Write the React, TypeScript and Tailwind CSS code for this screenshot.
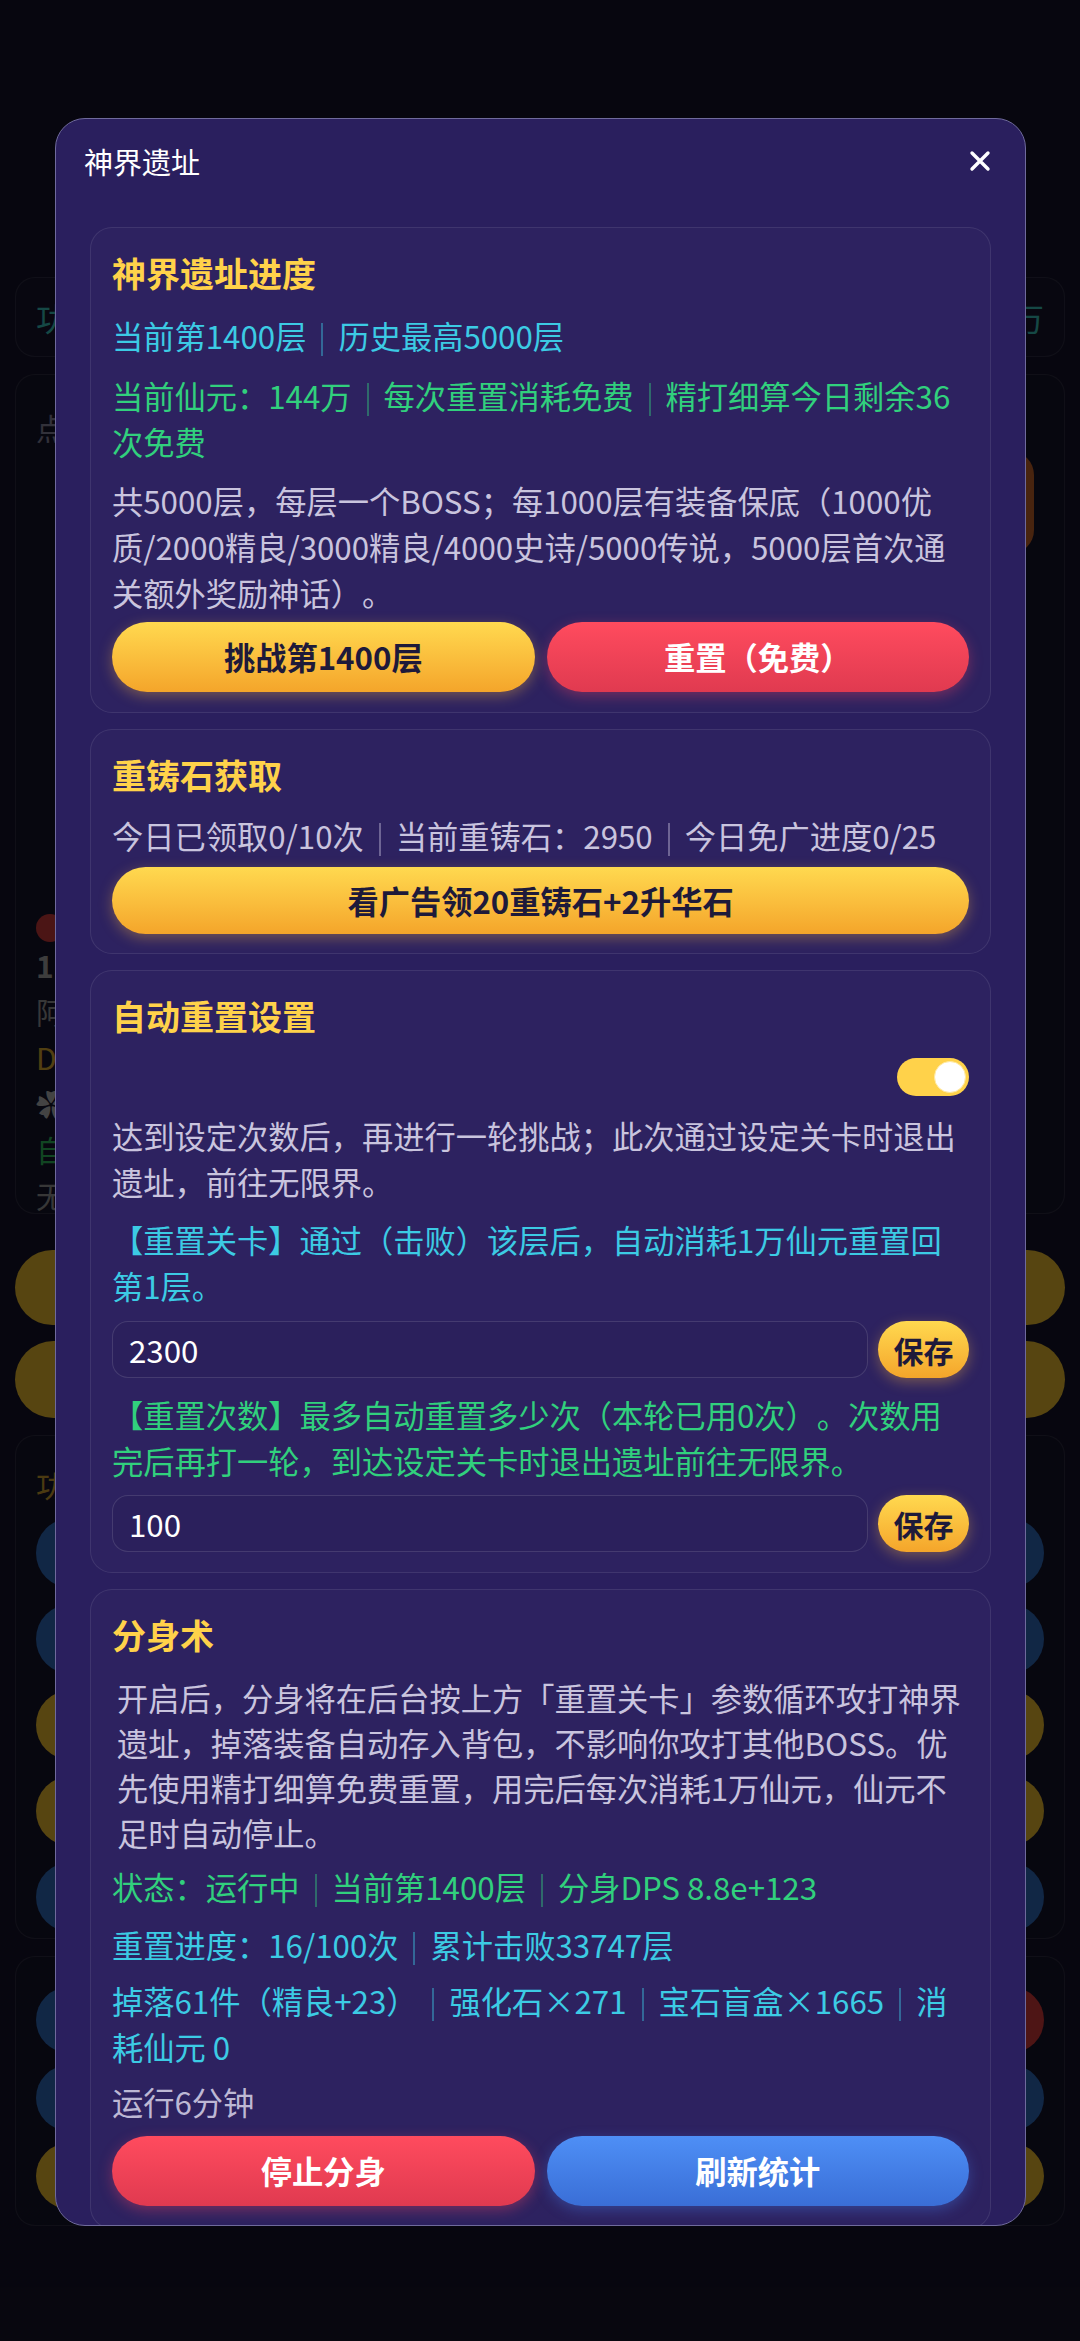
import React from "react";

const Sep = () => <span className="inline-block w-[2px] h-[33px] mx-[15px] align-[-7px] bg-current opacity-[0.42]" />;

function Card({ children, className = "" }: { children: React.ReactNode; className?: string }) {
  return (
    <div className={"shrink-0 rounded-[22px] border border-white/[0.09] bg-white/[0.015] px-[21px] pt-[21px] " + className}>
      {children}
    </div>
  );
}

function Title({ children }: { children: React.ReactNode }) {
  return <div className="text-[34px] leading-[48px] font-bold text-[#ffd24a]">{children}</div>;
}

function YellowBtn({ children, className = "" }: { children: React.ReactNode; className?: string }) {
  return (
    <div
      className={
        "flex items-center justify-center rounded-full bg-linear-to-b from-[#ffd94f] to-[#f4a52a] font-bold text-[#1e1a3a] shadow-[0_4px_14px_rgba(255,186,60,0.35)] " +
        className
      }
    >
      {children}
    </div>
  );
}

function RedBtn({ children, className = "" }: { children: React.ReactNode; className?: string }) {
  return (
    <div
      className={
        "flex items-center justify-center rounded-full bg-linear-to-b from-[#ff4b5e] to-[#e03a50] font-bold text-white shadow-[0_4px_14px_rgba(255,70,95,0.35)] " +
        className
      }
    >
      {children}
    </div>
  );
}

function BlueBtn({ children, className = "" }: { children: React.ReactNode; className?: string }) {
  return (
    <div
      className={
        "flex items-center justify-center rounded-full bg-linear-to-b from-[#4e8ff6] to-[#3a6ed6] font-bold text-white shadow-[0_4px_14px_rgba(70,130,240,0.35)] " +
        className
      }
    >
      {children}
    </div>
  );
}

function InputRow({ value, className = "" }: { value: string; className?: string }) {
  return (
    <div className={"flex items-center gap-[10px] " + className}>
      <input
        readOnly
        value={value}
        className="flex-1 min-w-0 h-[57px] rounded-[16px] border border-white/[0.12] bg-black/[0.04] pl-[16px] text-white outline-none"
      />
      <YellowBtn className="w-[91px] h-[57px] text-[30px]">保存</YellowBtn>
    </div>
  );
}

function Background() {
  return (
    <div className="flex flex-col px-[15px] pt-[277px] gap-[17px]">
      <div className="h-[80px] rounded-[20px] border border-white/10 bg-[#17152e] flex items-center justify-between px-[20px] text-[32px] text-[#3cc7c0]">
        <span>功</span>
        <span>万</span>
      </div>
      <div className="h-[840px] rounded-[20px] border border-white/10 bg-[#16142c] px-[20px] pt-[30px] flex flex-col">
        <div className="flex justify-between">
          <span className="text-[30px] text-[#8a88a0]">点</span>
          <div className="mt-[46px] mr-[10px] w-[120px] h-[103px] rounded-[24px] bg-[#c8652a]" />
        </div>
        <div className="mt-[360px] flex justify-between">
          <div className="flex flex-col text-[30px] leading-[46px]">
            <span className="w-[28px] h-[28px] rounded-full bg-[#d03a3a]" />
            <span className="font-bold text-[#aaa]">1</span>
            <span className="text-[#999]">阿</span>
            <span className="text-[#e0b030]">D</span>
            <span className="text-[#bbb]">✿</span>
            <span className="text-[#30c060]">自</span>
            <span className="text-[#999]">无</span>
          </div>
          <div className="mt-[80px] mr-[20px] w-[90px] h-[60px] rounded-full bg-[#f0c030]" />
        </div>
      </div>
      <div className="mt-[19px] h-[75px] rounded-full bg-[#f0c030]" />
      <div className="-mt-[1px] h-[77px] rounded-full bg-[#f0c030]" />
      <div className="h-[504px] rounded-[20px] border border-white/10 bg-[#16142c] px-[20px] pt-[30px] flex flex-col gap-[16px]">
        <span className="text-[30px] text-[#d0a030] leading-[36px]">功</span>
        <div className="h-[70px] rounded-full bg-[#2f6ec0]" />
        <div className="h-[70px] rounded-full bg-[#2f6ec0]" />
        <div className="h-[70px] rounded-full bg-[#f0c030]" />
        <div className="h-[70px] rounded-full bg-[#f0c030]" />
        <div className="h-[70px] rounded-full bg-[#2f6ec0]" />
      </div>
      <div className="h-[270px] rounded-[20px] border border-white/10 bg-[#16142c] px-[20px] pt-[30px] grid grid-cols-2 gap-[12px] content-start">
        <div className="h-[66px] rounded-full bg-[#2f6ec0]" />
        <div className="h-[66px] rounded-full bg-[#d83a3a]" />
        <div className="h-[66px] rounded-full bg-[#2f6ec0]" />
        <div className="h-[66px] rounded-full bg-[#2f6ec0]" />
        <div className="h-[66px] rounded-full bg-[#f0c030]" />
        <div className="h-[66px] rounded-full bg-[#f0c030]" />
      </div>
    </div>
  );
}

export default function App() {
  return (
    <div className="relative w-[1080px] h-[2341px] overflow-hidden bg-[#15132a] font-['Noto_Sans_CJK_SC','Noto_Sans',sans-serif] [text-spacing-trim:space-all]">
      <Background />
      <div className="absolute inset-0 bg-black/[0.64]" />

      <div className="absolute left-[55px] top-[118px] w-[971px] h-[2108px] rounded-[30px] border border-[#6f6a9c] bg-[#2a1f5e] overflow-hidden flex flex-col">
        <div className="h-[84px] shrink-0 flex items-center justify-between pl-[28px] pr-[34px]">
          <span className="text-[29px] leading-[40px] text-white">神界遗址</span>
          <svg width="22" height="22" viewBox="0 0 22 22">
            <path d="M3 3L19 19M19 3L3 19" stroke="white" strokeWidth="3.4" strokeLinecap="round" />
          </svg>
        </div>

        <div className="flex-1 overflow-hidden px-[34px] pt-[24px] flex flex-col gap-[16px] text-[31.25px] leading-[46px]">
          <Card className="pb-[20px]">
            <Title>神界遗址进度</Title>
            <div className="mt-[16px] text-[#3ccbe4]">
              当前第1400层<Sep />历史最高5000层
            </div>
            <div className="mt-[14px] text-[#31d07d]">
              当前仙元：144万<Sep />每次重置消耗免费<Sep />精打细算今日剩余36次免费
            </div>
            <div className="mt-[13px] text-[#c9c4de]">
              共5000层，每层一个BOSS；每1000层有装备保底（1000优质/2000精良/3000精良/4000史诗/5000传说，5000层首次通关额外奖励神话）。
            </div>
            <div className="mt-[6px] grid grid-cols-2 gap-[12px]">
              <YellowBtn className="h-[70px]">挑战第1400层</YellowBtn>
              <RedBtn className="h-[70px]">重置（免费）</RedBtn>
            </div>
          </Card>

          <Card className="pb-[19px]">
            <Title>重铸石获取</Title>
            <div className="mt-[14px] text-[#c9c4de]">
              今日已领取0/10次<Sep />当前重铸石：2950<Sep />今日免广进度0/25
            </div>
            <YellowBtn className="mt-[8px] h-[67px]">看广告领20重铸石+2升华石</YellowBtn>
          </Card>

          <Card className="pb-[20px]">
            <Title>自动重置设置</Title>
            <div className="mt-[18px] flex justify-end">
              <div className="w-[72px] h-[38px] rounded-full bg-[#ffd24a] flex items-center justify-end pr-[3px]">
                <div className="w-[32px] h-[32px] rounded-full bg-white border border-[#ffe9a0]" />
              </div>
            </div>
            <div className="mt-[17px] text-[#c9c4de]">
              达到设定次数后，再进行一轮挑战；此次通过设定关卡时退出遗址，前往无限界。
            </div>
            <div className="mt-[12px] text-[#3ccbe4]">【重置关卡】通过（击败）该层后，自动消耗1万仙元重置回第1层。</div>
            <InputRow value="2300" className="mt-[12px]" />
            <div className="mt-[14px] text-[#31d07d]">
              【重置次数】最多自动重置多少次（本轮已用0次）。次数用完后再打一轮，到达设定关卡时退出遗址前往无限界。
            </div>
            <InputRow value="100" className="mt-[11px]" />
          </Card>

          <Card className="pb-[22px]">
            <Title>分身术</Title>
            <div className="mt-[16px] pl-[5px] leading-[45px] text-[#c9c4de]">
              开启后，分身将在后台按上方「重置关卡」参数循环攻打神界遗址，掉落装备自动存入背包，不影响你攻打其他BOSS。优先使用精打细算免费重置，用完后每次消耗1万仙元，仙元不足时自动停止。
            </div>
            <div className="mt-[9px] text-[#31d07d]">
              状态：运行中<Sep />当前第1400层<Sep />分身DPS 8.8e+123
            </div>
            <div className="mt-[12px] text-[#3ccbe4]">
              重置进度：16/100次<Sep />累计击败33747层
            </div>
            <div className="mt-[10px] text-[#3ccbe4]">
              掉落61件（精良+23）<Sep />强化石×271<Sep />宝石盲盒×1665<Sep />消耗仙元 0
            </div>
            <div className="mt-[9px] text-[#bdb8d4]">运行6分钟</div>
            <div className="mt-[11px] grid grid-cols-2 gap-[12px]">
              <RedBtn className="h-[70px]">停止分身</RedBtn>
              <BlueBtn className="h-[70px]">刷新统计</BlueBtn>
            </div>
          </Card>
        </div>
      </div>
    </div>
  );
}
